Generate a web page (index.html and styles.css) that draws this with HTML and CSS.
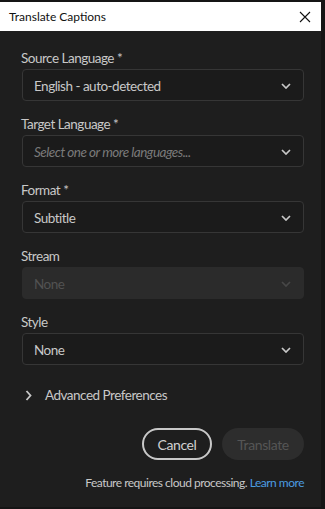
FILE: index.html
```html
<!DOCTYPE html>
<html lang="en">
<head>
    <meta charset="UTF-8">
    <meta name="viewport" content="width=device-width, initial-scale=1.0">
    <title>Translate Captions</title>
    <link rel="stylesheet" href="styles.css">
</head>
<body>
    <div class="dialog">
        <div class="titlebar">
            <span class="title">Translate Captions</span>
            <svg class="close" width="12" height="12" viewBox="0 0 12 12">
                <path d="M1 1 L11 11 M11 1 L1 11" stroke="#111" stroke-width="1.1" fill="none"/>
            </svg>
        </div>

        <div class="content">
            <div class="form-group">
                <label>Source Language *</label>
                <div class="picker">
                    <span class="value">English - auto-detected</span>
                    <svg class="chevron" width="10" height="6" viewBox="0 0 10 6"><path d="M1 1 L5 5 L9 1" fill="none" stroke="currentColor" stroke-width="1.7"/></svg>
                </div>
            </div>

            <div class="form-group">
                <label>Target Language *</label>
                <div class="picker">
                    <span class="value placeholder">Select one or more languages...</span>
                    <svg class="chevron" width="10" height="6" viewBox="0 0 10 6"><path d="M1 1 L5 5 L9 1" fill="none" stroke="currentColor" stroke-width="1.7"/></svg>
                </div>
            </div>

            <div class="form-group">
                <label>Format *</label>
                <div class="picker">
                    <span class="value">Subtitle</span>
                    <svg class="chevron" width="10" height="6" viewBox="0 0 10 6"><path d="M1 1 L5 5 L9 1" fill="none" stroke="currentColor" stroke-width="1.7"/></svg>
                </div>
            </div>

            <div class="form-group">
                <label>Stream</label>
                <div class="picker disabled">
                    <span class="value">None</span>
                    <svg class="chevron" width="10" height="6" viewBox="0 0 10 6"><path d="M1 1 L5 5 L9 1" fill="none" stroke="currentColor" stroke-width="1.7"/></svg>
                </div>
            </div>

            <div class="form-group">
                <label>Style</label>
                <div class="picker">
                    <span class="value">None</span>
                    <svg class="chevron" width="10" height="6" viewBox="0 0 10 6"><path d="M1 1 L5 5 L9 1" fill="none" stroke="currentColor" stroke-width="1.7"/></svg>
                </div>
            </div>

            <div class="advanced">
                <svg class="arrow" width="7" height="11" viewBox="0 0 7 11"><path d="M1.5 1 L5.5 5.5 L1.5 10" fill="none" stroke="currentColor" stroke-width="1.8"/></svg>
                <span>Advanced Preferences</span>
            </div>

            <div class="actions">
                <button class="btn btn-cancel">Cancel</button>
                <button class="btn btn-translate" disabled>Translate</button>
            </div>

            <div class="footer">
                Feature requires cloud processing. <a href="#">Learn more</a>
            </div>
        </div>
    </div>
</body>
</html>
```

FILE: styles.css
```css
body {
    margin: 0;
    padding: 0;
    background-color: #151515;
    font-family: 'Lato', sans-serif;
    width: 325px;
    height: 509px;
    overflow: hidden;
}

.dialog {
    margin-top: 2px;
    width: 321px;
    height: 505px;
    background-color: #1e1e1e;
    display: flex;
    flex-direction: column;
}

.titlebar {
    height: 29px;
    background-color: #fff;
    display: flex;
    align-items: center;
    justify-content: space-between;
    padding: 0 8px 0 9px;
}

.title {
    font-size: 12px;
    color: #111;
}

.close {
    margin-right: 2px;
}

.content {
    padding: 17px 17px 0 21px;
    font-size: 13.5px;
    letter-spacing: -0.5px;
}

.form-group {
    margin-bottom: 13px;
}

label {
    display: block;
    color: #c8c8c8;
    height: 20px;
    line-height: 20px;
    margin-bottom: 1px;
}

.picker {
    height: 29px;
    margin-left: 1px;
    border: 1px solid #363636;
    border-radius: 4px;
    background-color: #1b1b1b;
    display: flex;
    align-items: center;
    justify-content: space-between;
    padding: 1px 12px 0 11px;
    box-sizing: content-box;
    color: #c8c8c8;
}

.placeholder {
    font-style: italic;
    color: #7a7a7a;
}

.chevron {
    color: #c8c8c8;
}

.picker.disabled {
    background-color: #2b2b2b;
    border-color: #2b2b2b;
    color: #525252;
}

.picker.disabled .chevron {
    color: #474747;
}

.advanced {
    display: flex;
    align-items: center;
    margin-top: 22px;
    padding-left: 4px;
    color: #c8c8c8;
}

.advanced .arrow {
    margin-right: 13px;
}

.actions {
    display: flex;
    justify-content: flex-end;
    gap: 10px;
    margin-top: 25px;
}

.btn {
    height: 32px;
    border-radius: 16px;
    font-family: inherit;
    font-size: 14px;
    letter-spacing: -0.4px;
    padding: 0 8px;
}

.btn-cancel {
    width: 70px;
    background: transparent;
    border: 2px solid #c8c8c8;
    color: #d0d0d0;
}

.btn-translate {
    width: 82px;
    background-color: #2d2d2d;
    border: none;
    color: #555;
}

.footer {
    margin-top: 15px;
    text-align: right;
    font-size: 12px;
    letter-spacing: -0.5px;
    color: #c8c8c8;
}

.footer a {
    color: #4b9ce0;
    text-decoration: none;
}
```
